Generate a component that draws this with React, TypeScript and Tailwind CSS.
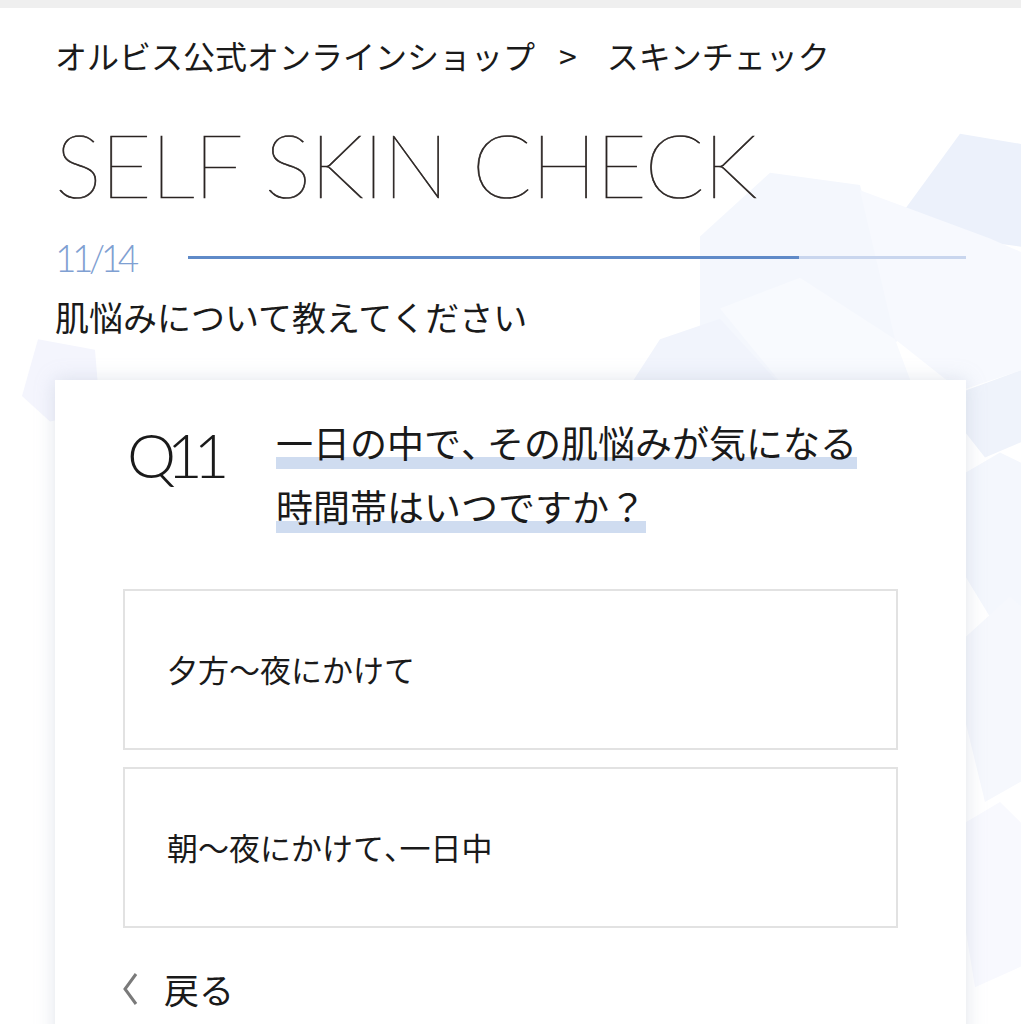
import React from 'react';

const jp = "font-['Noto_Sans_CJK_JP',sans-serif]";
const latin = "font-['Lato','Noto_Sans_CJK_JP',sans-serif]";

// comma drawn narrower, as the site does
const Comma = ({ tight }: { tight?: boolean }) => (
  <span className={tight ? 'tracking-[-0.5em]' : 'tracking-[-0.3em]'}>、</span>
);

function Backdrop() {
  // soft faceted pattern behind the page
  return (
    <svg
      className="absolute inset-0 w-full h-full pointer-events-none"
      viewBox="0 0 1021 1024"
      preserveAspectRatio="none"
    >
      <polygon points="770,168 860,180 900,330 800,395 700,360 700,230" fill="#f4f7fd" />
      <polygon points="900,210 960,130 1021,140 1021,240 985,235" fill="#ecf1fb" />
      <polygon points="860,185 990,232 1021,245 1021,360 960,380 895,330" fill="#f7f9fe" />
      <polygon points="630,375 660,330 720,310 800,395" fill="#f1f4fc" />
      <polygon points="720,300 800,395 920,395 895,330 800,270" fill="#f8fafe" />
      <polygon points="38,330 95,340 100,400 50,410 22,385" fill="#f4f5fd" />
      <polygon points="965,380 1021,360 1021,430 985,445 965,420" fill="#eff3fb" />
      <polygon points="965,460 1000,440 1021,450 1021,640 990,600 965,560" fill="#f4f7fd" />
      <polygon points="965,620 1010,580 1021,590 1021,760 985,780 965,700" fill="#f6f8fd" />
      <polygon points="965,800 1000,780 1021,800 1021,940 975,960 965,900" fill="#f8f9fe" />
    </svg>
  );
}

function Highlight({ children }: { children: React.ReactNode }) {
  return (
    <span className="bg-[linear-gradient(transparent_77%,#cfdcf0_77%,#cfdcf0_100%)] [box-decoration-break:clone] [-webkit-box-decoration-break:clone]">
      {children}
    </span>
  );
}

export default function App() {
  return (
    <div className="relative min-h-screen bg-white overflow-hidden text-[#231815]">
      <div className="relative h-2 bg-[#efefef]" />
      <Backdrop />

      <div className="relative px-[55px]">
        {/* Breadcrumb */}
        <nav className={`${jp} text-[32px] leading-[48px] pt-[23px] text-[#1a1a1a] whitespace-nowrap`}>
          <span>オルビス公式オンラインショップ</span>
          <span className="ml-[24px] mr-[30px]">&gt;</span>
          <span>スキンチェック</span>
        </nav>

        {/* Title */}
        <h1 className={`${latin} font-thin text-[88px] leading-[88px] mt-[41px] tracking-[-0.012em] text-[#2b2523] [-webkit-text-stroke:0.7px_#2b2523]`}>
          SELF SKIN CHECK
        </h1>

        {/* Progress */}
        <div className="flex items-center gap-[56px] mt-[27px] h-[44px]">
          <span className={`${latin} font-light text-[37px] leading-none text-[#7fa0d2] tracking-[-0.12em] w-[77px] whitespace-nowrap`}>
            11/14
          </span>
          <div className="flex-1 flex h-[3px] bg-[#c9d6ee]">
            <div className="h-full bg-[#5f8ac8]" style={{ width: `${(11 / 14) * 100}%` }} />
          </div>
        </div>

        <p className={`${jp} text-[34px] leading-[48px] mt-[14px] text-[#1a1a1a]`}>
          肌悩みについて教えてください
        </p>

        {/* Question card */}
        <section className="mt-[39px] bg-white shadow-[0_0_18px_rgba(170,180,200,0.35)] px-[68px] pt-[30px] pb-[40px]">
          <div className="flex items-start">
            <span className={`${latin} font-light text-[62px] leading-[64px] tracking-[-0.15em] w-[153px] pl-[4px] pt-[12px] text-[#1a1a1a]`}>
              Q11
            </span>
            <h2 className={`${jp} text-[37px] leading-[64px] text-[#1a1a1a] flex-1`}>
              <Highlight>一日の中で<Comma />その肌悩みが気になる</Highlight>
              <br />
              <Highlight>時間帯はいつですか？</Highlight>
            </h2>
          </div>

          <div className="mt-[51px] flex flex-col gap-[17px]">
            {[
              <>夕方〜夜にかけて</>,
              <>朝〜夜にかけて<Comma tight />一日中</>,
            ].map((o, i) => (
              <button
                key={i}
                className={`${jp} h-[161px] w-full border-2 border-[#e2e2e2] bg-white text-left pl-[42px] text-[31px] text-[#1a1a1a]`}
              >
                {o}
              </button>
            ))}
          </div>

          <div className="mt-[37px] flex items-center gap-[26px]">
            <svg width="16" height="34" viewBox="0 0 16 34" className="ml-[-1px]">
              <polyline points="14,2 3,17 14,32" fill="none" stroke="#7a7a7a" strokeWidth="3" />
            </svg>
            <span className={`${jp} text-[35px] leading-[48px] text-[#1a1a1a]`}>戻る</span>
          </div>
        </section>
      </div>
    </div>
  );
}
